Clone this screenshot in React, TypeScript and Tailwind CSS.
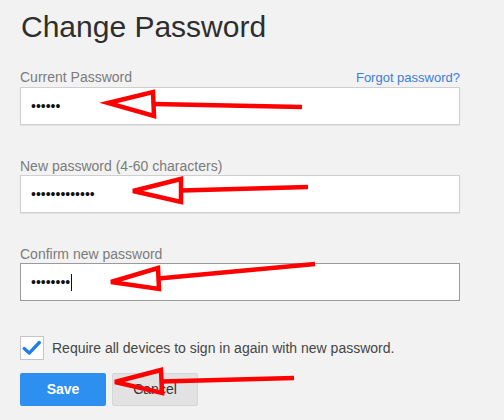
import React from 'react';

const fieldLabel = 'text-[14px] leading-[16px] text-[#7b7b7b]';

interface PasswordFieldProps {
  label: string;
  dots: number;
  focused?: boolean;
  aside?: React.ReactNode;
  className?: string;
}

const PasswordField = ({ label, dots, focused, aside, className }: PasswordFieldProps) => (
  <div className={className}>
    <div className="mb-px flex items-baseline justify-between">
      <span className={fieldLabel}>{label}</span>
      {aside}
    </div>
    <div
      className={
        'flex h-[38px] items-center border bg-white pl-[10px] ' +
        (focused ? 'border-[#9a9a9a]' : 'border-[#cfcfcf] shadow-[0_1px_1px_rgba(0,0,0,0.06)]')
      }
    >
      <span className="text-[14px] leading-none tracking-[0px] text-[#111]">{'•'.repeat(dots)}</span>
      {focused && <span className="ml-px h-[17px] w-px bg-[#111]" />}
    </div>
  </div>
);

// red annotation arrows drawn over the form
const arrows = [
  { tip: [108, 103], top: [153, 92], bottom: [154, 116], tail: [302, 107] },
  { tip: [133, 191], top: [181, 179], bottom: [181, 202], tail: [308, 187] },
  { tip: [111, 282], top: [158, 268], bottom: [159, 289], tail: [315, 264] },
  { tip: [115, 382], top: [161, 370], bottom: [162, 393], tail: [294, 378] },
];

const Arrows = () => (
  <svg className="pointer-events-none absolute left-0 top-0" width="504" height="420" viewBox="0 0 504 420">
    {arrows.map(({ tip, top, bottom, tail }, i) => {
      const baseX = (top[0] + bottom[0]) / 2;
      const baseY = (top[1] + bottom[1]) / 2;
      return (
        <g key={i} stroke="#ff0000" fill="none" strokeLinejoin="miter">
          <line x1={baseX} y1={baseY} x2={tail[0]} y2={tail[1]} strokeWidth="4.5" />
          <polygon points={`${tip.join(',')} ${top.join(',')} ${bottom.join(',')}`} strokeWidth="4.5" />
        </g>
      );
    })}
  </svg>
);

export default function App() {
  return (
    <div
      className="relative h-[420px] w-[504px] overflow-hidden bg-[#f2f2f2]"
      style={{ fontFamily: '"Liberation Sans", Arial, sans-serif' }}
    >
      <div className="w-[460px] pl-[20px] pt-[12px]">
        <h1 className="pl-px text-[30px] font-normal leading-[30px] text-[#2e2e2e]">Change Password</h1>

        <PasswordField
          className="mt-[27px]"
          label="Current Password"
          dots={6}
          aside={<a className="text-[13px] leading-[16px] text-[#3b7dd8]">Forgot password?</a>}
        />
        <PasswordField className="mt-[33px]" label="New password (4-60 characters)" dots={13} />
        <PasswordField className="mt-[33px]" label="Confirm new password" dots={8} focused />

        <label className="mt-[35px] flex items-center gap-[8px]">
          <span className="flex h-[24px] w-[24px] items-center justify-center border border-[#c4c4c4] bg-white">
            <svg width="22" height="22" viewBox="0 0 24 24" fill="none">
              <path d="M3.5 12.5 L9 17.5 L20 6" stroke="#1f7ee8" strokeWidth="3.6" strokeLinecap="round" strokeLinejoin="round" />
            </svg>
          </span>
          <span className="text-[14px] text-[#454545]">Require all devices to sign in again with new password.</span>
        </label>

        <div className="mt-[13px] flex gap-[6px]">
          <button className="h-[33px] w-[86px] rounded-[2px] bg-[#2d8ff0] text-[14px] font-bold text-white">
            Save
          </button>
          <button className="h-[33px] w-[86px] rounded-[2px] border border-[#d6d6d6] bg-[#e2e2e2] text-[14px] text-[#333]">
            Cancel
          </button>
        </div>
      </div>
      <Arrows />
    </div>
  );
}
